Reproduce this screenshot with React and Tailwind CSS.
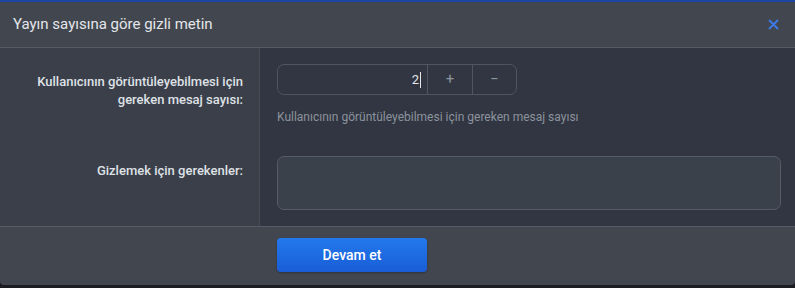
import React, { useState } from 'react';

const Label = ({ children }) => (
  <div className="text-right text-[13px] leading-[18px] font-medium text-[#dfe2e7]">{children}</div>
);

export default function App() {
  const [count, setCount] = useState(2);

  return (
    <div className="w-[795px] h-[288px] bg-[#1b1d22] font-['Roboto',sans-serif] overflow-hidden">
      <div className="h-[2px] bg-[#1c45a6]" />
      <div className="bg-[#42464f] rounded-b-[4px] overflow-hidden">
        {/* header */}
        <div className="h-[46px] flex items-center justify-between pl-[13px] pr-[16px] border-b border-[#555a63]">
          <h2 className="text-[15px] text-[#e4e6ea]">Yayın sayısına göre gizli metin</h2>
          <button className="text-[#3b7be8] text-[18px] leading-none">
            <svg width="11" height="11" viewBox="0 0 11 11" stroke="currentColor" strokeWidth="1.8" fill="none">
              <path d="M1 1l9 9M10 1l-9 9" />
            </svg>
          </button>
        </div>

        {/* body */}
        <div className="grid grid-cols-[260px_1fr] border-b border-[#555a63]">
          <div className="bg-[#3b3f49] border-r border-[#464b55] pr-[16px] pt-[16px] pb-[16px]">
            <div className="h-[92px] pt-[9px]">
              <Label>
                Kullanıcının görüntüleyebilmesi için
                <br />
                gereken mesaj sayısı:
              </Label>
            </div>
            <div className="pt-[6px]">
              <Label>Gizlemek için gerekenler:</Label>
            </div>
          </div>
          <div className="bg-[#313642] pl-[17px] pr-[14px] pt-[16px] pb-[16px]">
            <div className="h-[92px]">
              <div className="flex w-[240px] h-[31px] border border-[#4f5562] rounded-[7px] overflow-hidden">
                <div className="flex-1 flex items-center justify-end pr-[6px] text-[13px] text-[#e4e6ea]">
                  {count}
                  <span className="w-px h-[16px] bg-[#e4e6ea] ml-[1px]" />
                </div>
                <button
                  onClick={() => setCount(count + 1)}
                  className="w-[45px] border-l border-[#4f5562] text-[#8e949e] text-[15px] flex items-center justify-center"
                >
                  +
                </button>
                <button
                  onClick={() => setCount(Math.max(0, count - 1))}
                  className="w-[44px] border-l border-[#4f5562] text-[#8e949e] text-[15px] flex items-center justify-center"
                >
                  −
                </button>
              </div>
              <p className="mt-[13px] text-[12px] text-[#8c929c]">
                Kullanıcının görüntüleyebilmesi için gereken mesaj sayısı
              </p>
            </div>
            <textarea className="block w-full h-[54px] bg-[#3b414b] border border-[#565c67] rounded-[7px] resize-none outline-none text-[13px] text-[#e4e6ea] p-2" />
          </div>
        </div>

        {/* footer */}
        <div className="h-[58px] pt-[11px] pl-[277px]">
          <button className="w-[150px] h-[34px] rounded-[4px] bg-gradient-to-b from-[#2479ec] to-[#195dd6] text-white text-[14px] font-medium shadow-[0_1px_2px_rgba(0,0,0,0.3)]">
            Devam et
          </button>
        </div>
      </div>
    </div>
  );
}
